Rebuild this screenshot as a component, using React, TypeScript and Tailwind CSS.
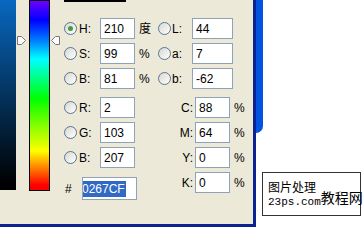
import React from "react";

function Radio({ on }: { on?: boolean }) {
  return (
    <span className="w-[13px] h-[13px] shrink-0 rounded-full border border-[#5a7595] bg-linear-to-br from-[#d8d8d0] to-white flex items-center justify-center">
      {on && <span className="w-[5px] h-[5px] rounded-full bg-[#3f9f3f]" />}
    </span>
  );
}

function Field({ value, w = "w-[35px]" }: { value: string; w?: string }) {
  return (
    <div className={`${w} h-[21px] shrink-0 border border-[#8fa3b8] bg-white flex items-center pl-[3px]`}>
      {value}
    </div>
  );
}

function Arrow({ dir }: { dir: "right" | "left" }) {
  return (
    <svg width="9" height="9" viewBox="0 0 9 9">
      {dir === "right" ? (
        <path d="M0.5 0.5 H4.5 L8.5 4.5 L4.5 8.5 H0.5 Z" fill="#fff" stroke="#777" />
      ) : (
        <path d="M8.5 0.5 H4.5 L0.5 4.5 L4.5 8.5 H8.5 Z" fill="#fff" stroke="#777" />
      )}
    </svg>
  );
}

function Row({
  k,
  v,
  unit,
  k2,
  v2,
  on,
}: {
  k: string;
  v: string;
  unit?: string;
  k2?: string;
  v2?: string;
  on?: boolean;
}) {
  return (
    <div className="flex items-center h-[21px]">
      <Radio on={on} />
      <span className="w-[23px] pl-[2px]">{k}</span>
      <Field value={v} />
      {k2 !== undefined && (
        <>
          <span className="w-[23px] pl-[4px]">{unit}</span>
          <Radio />
          <span className="w-[21px] pl-[1px]">{k2}</span>
          <Field value={v2 ?? ""} w="w-[41px]" />
        </>
      )}
    </div>
  );
}

function Cmyk({ k, v }: { k: string; v: string }) {
  return (
    <div className="flex items-center h-[21px]">
      <span className="w-[58px] text-right pr-[2px]">{k}</span>
      <Field value={v} />
      <span className="pl-[4px]">%</span>
    </div>
  );
}

export default function App() {
  return (
    <div className="w-[364px] h-[242px] bg-white overflow-hidden font-['Liberation_Sans','Noto_Sans_CJK_SC',sans-serif] text-[12px] text-black">
      <div className="flex">
        <div className="w-[256px] h-[227px] shrink-0 bg-[#ece9d8] border-r-[3px] border-b-[3px] border-[#0c2290] flex">
          {/* colour field */}
          <div className="w-[16px] h-[190px] bg-[linear-gradient(to_bottom,#0868c0,#000_185px)]" />
          {/* hue slider */}
          <div className="w-[13px] pt-[36px] pl-[1px]">
            <Arrow dir="right" />
          </div>
          <div className="w-[21px] h-[191px] border border-black bg-[linear-gradient(to_bottom,#7000ff_0px,#0000ff_19px,#0080ff_40px,#00ffff_58px,#00ff00_98px,#ffff00_150px,#ff0000_184px)]" />
          <div className="w-[14px] pt-[36px] pl-[1px]">
            <Arrow dir="left" />
          </div>

          {/* values */}
          <div className="w-[189px] flex flex-col">
            <div className="w-[62px] h-[2px] bg-black" />
            <div className="mt-[16px] flex flex-col gap-[4px]">
              <Row on k="H:" v="210" unit="度" k2="L:" v2="44" />
              <Row k="S:" v="99" unit="%" k2="a:" v2="7" />
              <Row k="B:" v="81" unit="%" k2="b:" v2="-62" />
            </div>
            <div className="mt-[8px] flex">
              <div className="flex flex-col gap-[4px]">
                <Row k="R:" v="2" />
                <Row k="G:" v="103" />
                <Row k="B:" v="207" />
                <div className="flex items-center mt-[5px]">
                  <span className="w-[18px] pl-[1px]">#</span>
                  <div className="w-[55px] h-[23px] border border-[#8fa3b8] bg-white flex items-center overflow-hidden pl-[1px]">
                    <span className="bg-[#316ac5] text-white leading-[16px] -ml-[2px] pr-[1px]">0267CF</span>
                  </div>
                </div>
              </div>
              <div className="flex flex-col gap-[4px]">
                <Cmyk k="C:" v="88" />
                <Cmyk k="M:" v="64" />
                <Cmyk k="Y:" v="0" />
                <Cmyk k="K:" v="0" />
              </div>
            </div>
          </div>
        </div>

        <div className="flex flex-col">
          <div className="w-[7px] h-[133px] bg-[#0254e0] rounded-br-[7px]" />
          <div className="mt-[39px] ml-[6px] w-[99px] h-[44px] border border-[#333] bg-white flex pl-[5px] pt-[6px] whitespace-nowrap">
            <div className="flex flex-col shrink-0">
              <span className="text-[12px] leading-[16px] font-['Noto_Sans_CJK_SC',sans-serif]">图片处理</span>
              <span className="text-[11px] leading-[14px] font-['Liberation_Mono',monospace]">23ps.com</span>
            </div>
            <span className="shrink-0 text-[14px] leading-[18px] mt-[9px] font-['Noto_Sans_CJK_SC',sans-serif]">教程网</span>
          </div>
        </div>
      </div>
    </div>
  );
}
